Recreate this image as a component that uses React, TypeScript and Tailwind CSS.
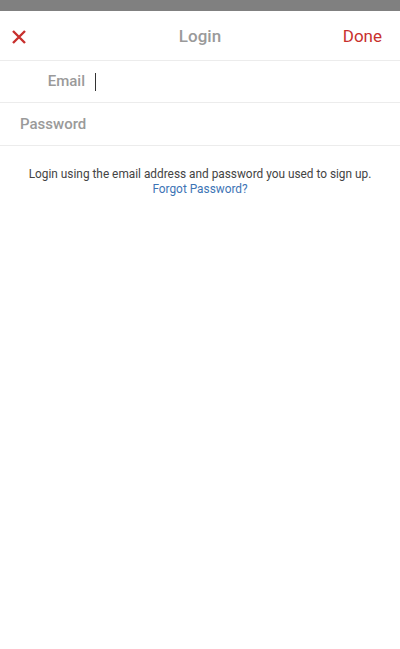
export default function App() {
  return (
    <div className="min-h-screen bg-[#808080] font-['Roboto',sans-serif]">
      <div className="h-[11px]" />
      <div className="min-h-[638px] bg-white">
        {/* header */}
        <div className="grid h-[50px] grid-cols-[1fr_auto_1fr] items-center border-b border-[#ececec] px-[11px] pt-[2px]">
          <div className="flex">
            <button className="flex h-[16px] w-[16px] items-center justify-center">
              <svg viewBox="0 0 16 16" width="16" height="16">
                <path d="M2 2 L14 14 M14 2 L2 14" stroke="#c8302e" strokeWidth="2.4" />
              </svg>
            </button>
          </div>
          <p className="text-[17px] font-medium text-[#9a9a9a]">Login</p>
          <div className="flex justify-end pr-[7px]">
            <button className="text-[17px] text-[#c8302e]">Done</button>
          </div>
        </div>
        {/* fields */}
        <div className="flex h-[42px] items-center border-b border-[#ececec] pl-[20px]">
          <span className="w-[65px] text-right text-[15px] font-medium text-[#9a9a9a]">Email</span>
          <span className="ml-[10px] h-[18px] w-[1px] bg-[#333]" />
        </div>
        <div className="flex h-[43px] items-center border-b border-[#ececec] pl-[20px]">
          <span className="w-[65px] text-right text-[15px] font-medium text-[#9a9a9a]">Password</span>
        </div>
        <div className="flex flex-col items-center pt-[21px] text-[11.85px] leading-[15px]">
          <p className="text-[#444]">Login using the email address and password you used to sign up.</p>
          <a className="text-[#3d74b5]">Forgot Password?</a>
        </div>
      </div>
    </div>
  )
}
